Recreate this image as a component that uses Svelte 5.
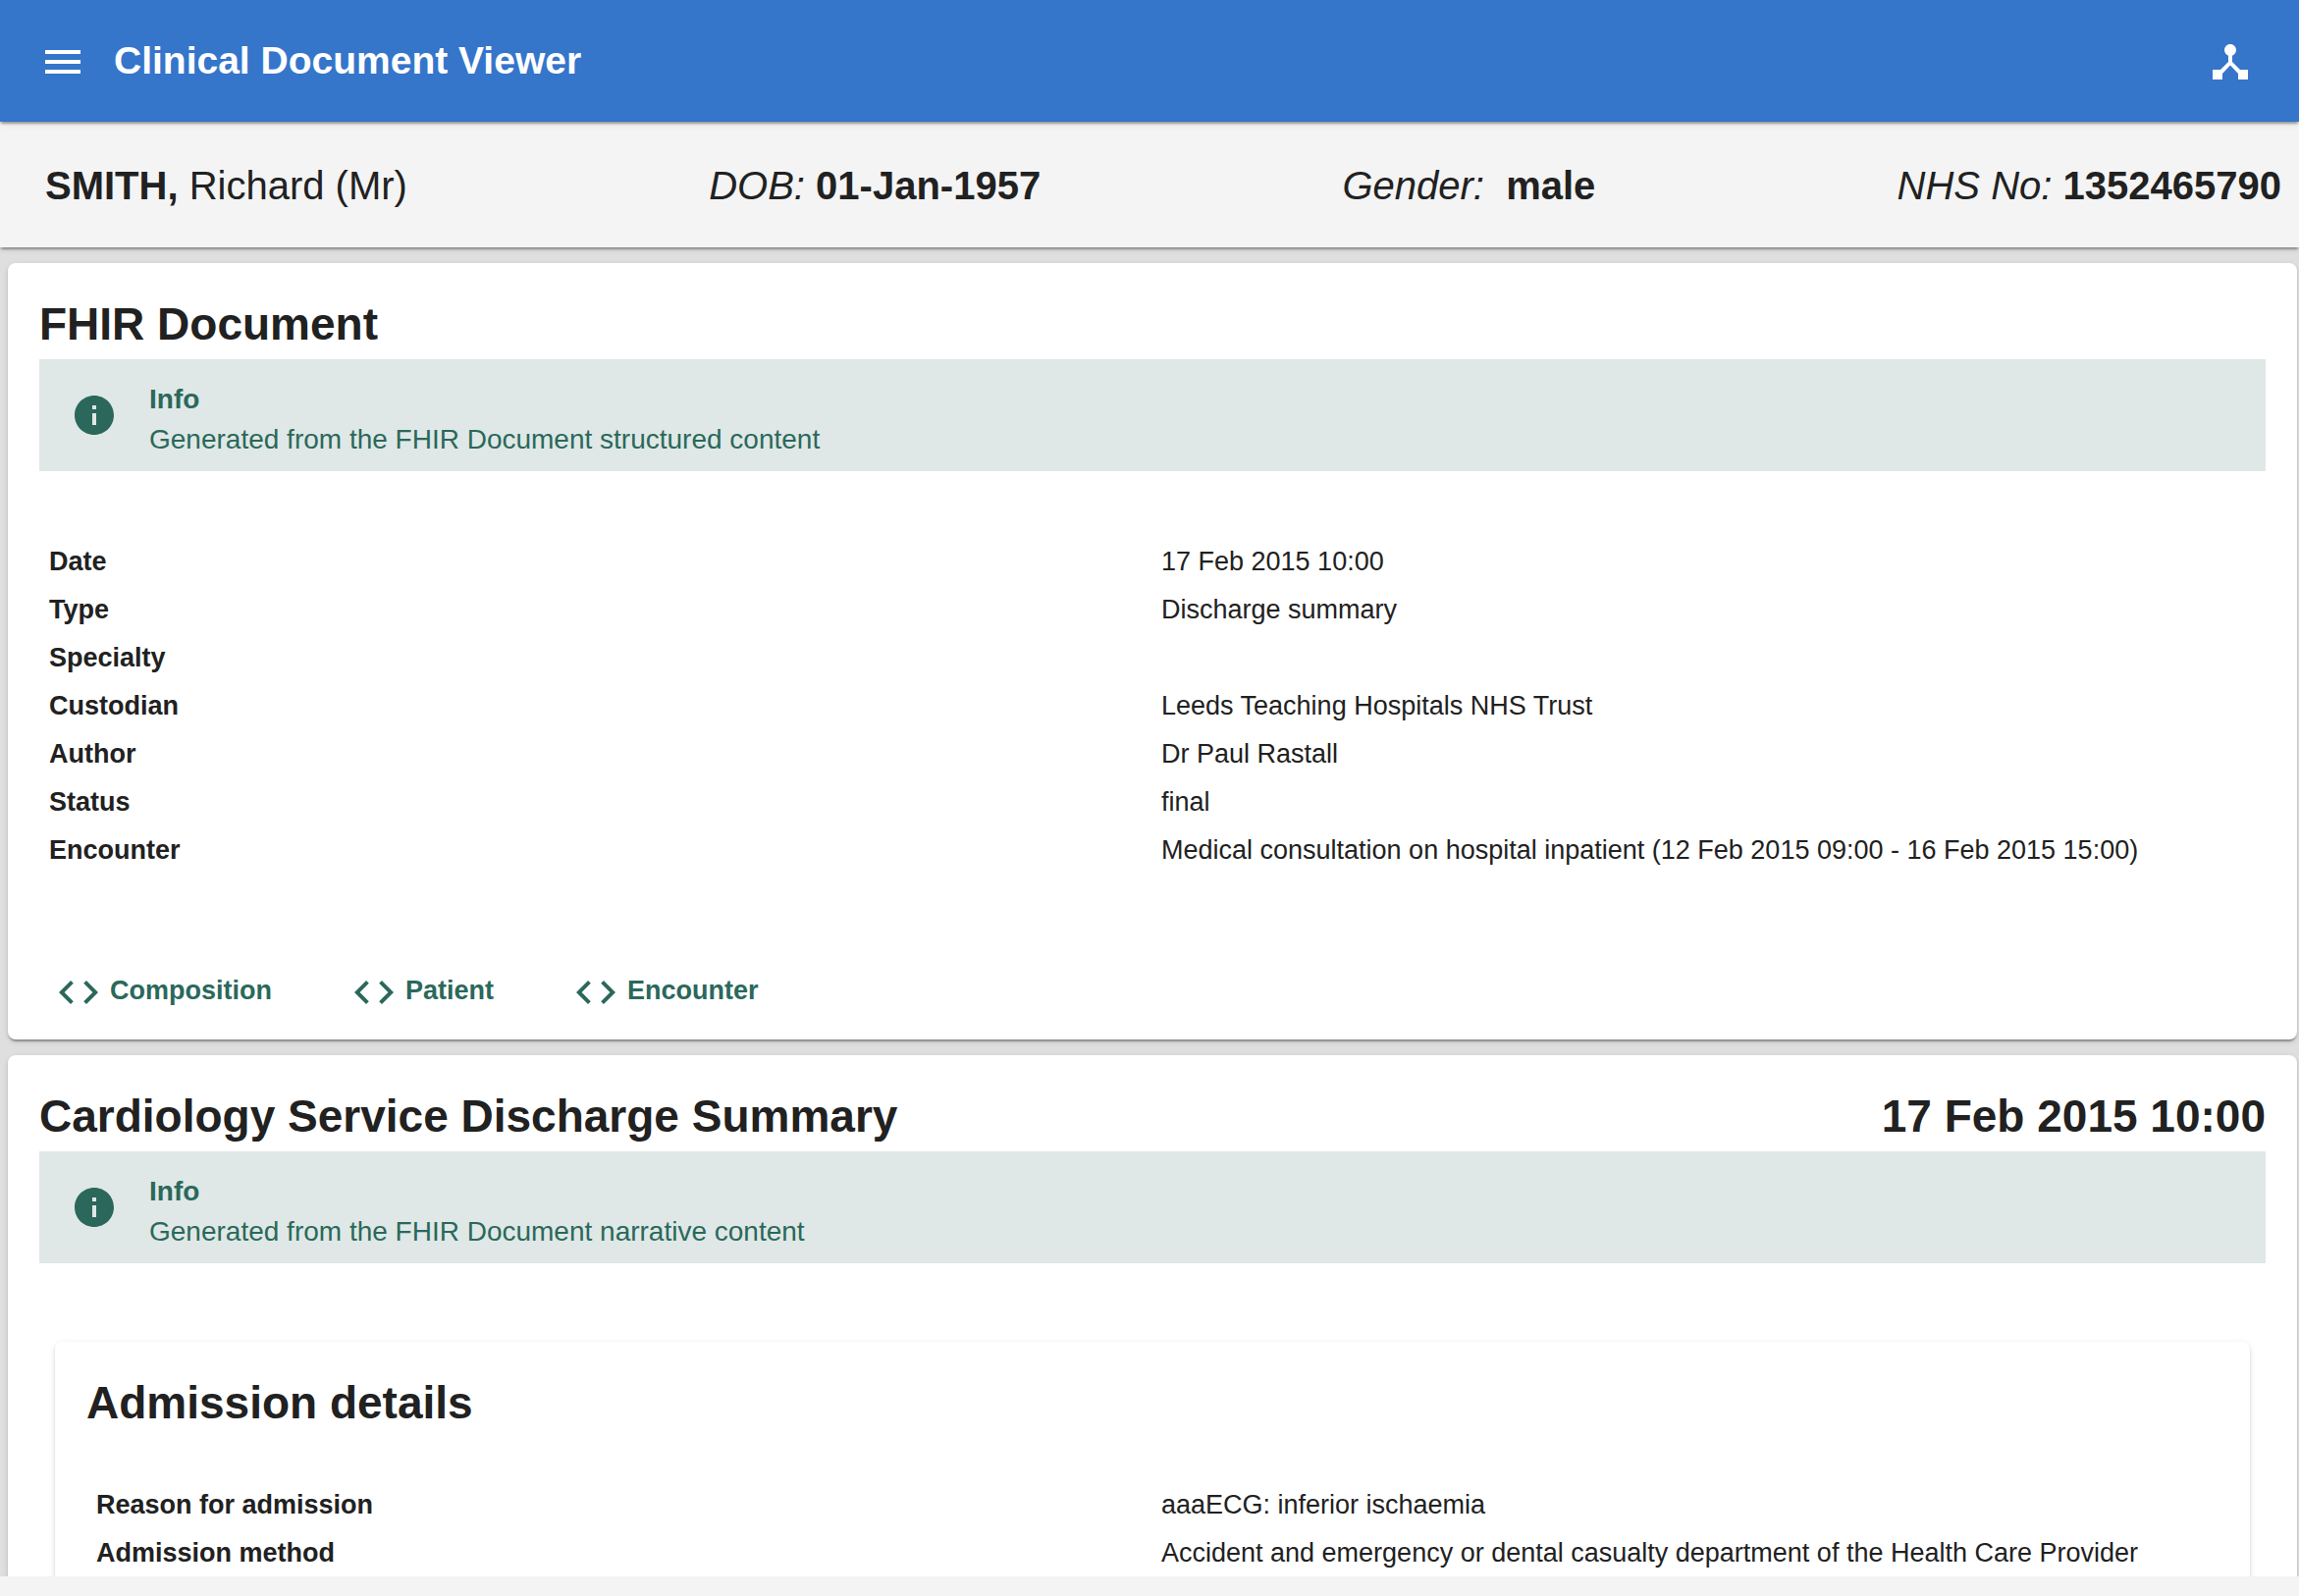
<script>
  const patient = {
    family: 'SMITH,',
    given: 'Richard (Mr)',
    dob: '01-Jan-1957',
    gender: 'male',
    nhs: '1352465790',
  };

  const documentRows = [
    ['Date', '17 Feb 2015 10:00'],
    ['Type', 'Discharge summary'],
    ['Specialty', ''],
    ['Custodian', 'Leeds Teaching Hospitals NHS Trust'],
    ['Author', 'Dr Paul Rastall'],
    ['Status', 'final'],
    ['Encounter', 'Medical consultation on hospital inpatient (12 Feb 2015 09:00 - 16 Feb 2015 15:00)'],
  ];

  const admissionRows = [
    ['Reason for admission', 'aaaECG: inferior ischaemia'],
    ['Admission method', 'Accident and emergency or dental casualty department of the Health Care Provider'],
  ];

  const resources = ['Composition', 'Patient', 'Encounter'];
</script>

{#snippet info(message)}
  <div class="info" role="note">
    <svg class="icon" viewBox="0 0 24 24" aria-hidden="true">
      <path d="M12 2C6.48 2 2 6.48 2 12s4.48 10 10 10 10-4.48 10-10S17.52 2 12 2zm1 15h-2v-6h2v6zm0-8h-2V7h2v2z" />
    </svg>
    <div class="info-text">
      <strong>Info</strong>
      <p>{message}</p>
    </div>
  </div>
{/snippet}

{#snippet details(rows)}
  <table>
    <tbody>
      {#each rows as [label, value]}
        <tr>
          <th scope="row">{label}</th>
          <td>{value}</td>
        </tr>
      {/each}
    </tbody>
  </table>
{/snippet}

<div class="shell">
  <header class="appbar">
    <button class="icon-button" aria-label="Open menu">
      <svg class="icon" viewBox="0 0 24 24" aria-hidden="true">
        <path d="M3 18h18v-2H3v2zm0-5h18v-2H3v2zm0-7v2h18V6H3z" />
      </svg>
    </button>
    <h1>Clinical Document Viewer</h1>
    <button class="icon-button end" aria-label="Resource map">
      <svg class="icon" viewBox="0 0 24 24" aria-hidden="true">
        <path d="M17 16l-4-4V8.82C14.16 8.4 15 7.3 15 6c0-1.66-1.34-3-3-3S9 4.34 9 6c0 1.3.84 2.4 2 2.82V12l-4 4H3v5h5v-3.05l4-4.2 4 4.2V21h5v-5h-4z" />
      </svg>
    </button>
  </header>

  <section class="patient" aria-label="Patient">
    <div><b>{patient.family}</b> {patient.given}</div>
    <div><i>DOB:</i> <b>{patient.dob}</b></div>
    <div><i>Gender:</i>&nbsp; <b>{patient.gender}</b></div>
    <div><i>NHS No:</i> <b>{patient.nhs}</b></div>
  </section>

  <main>
    <section class="card">
      <h2>FHIR Document</h2>
      {@render info('Generated from the FHIR Document structured content')}
      <div class="document-details">
        {@render details(documentRows)}
      </div>
      <div class="actions">
        {#each resources as name}
          <button class="resource">
            <svg class="icon" viewBox="0 0 24 24" aria-hidden="true">
              <path d="M9.4 16.6L4.8 12l4.6-4.6L8 6l-6 6 6 6 1.4-1.4zm5.2 0l4.6-4.6-4.6-4.6L16 6l6 6-6 6-1.4-1.4z" />
            </svg>
            <span>{name}</span>
          </button>
        {/each}
      </div>
    </section>

    <section class="card">
      <div class="title-row">
        <h2>Cardiology Service Discharge Summary</h2>
        <h2>17 Feb 2015 10:00</h2>
      </div>
      {@render info('Generated from the FHIR Document narrative content')}
      <section class="card inner">
        <h2>Admission details</h2>
        {@render details(admissionRows)}
      </section>
    </section>
  </main>
  <footer></footer>
</div>

<style>
  :global(body) {
    background: #f4f4f4;
  }

  .shell {
    display: flex;
    flex-direction: column;
    height: 100vh;
    overflow: hidden;
    color: #212121;
    font-family: 'Liberation Sans', Arial, sans-serif;
    font-size: 27px;
    line-height: 33px;
  }

  h1,
  h2,
  p {
    margin: 0;
  }

  button {
    padding: 0;
    border: 0;
    background: none;
    color: inherit;
    font: inherit;
    cursor: pointer;
  }

  .icon {
    display: block;
    flex: none;
    width: 48px;
    height: 48px;
    fill: currentColor;
  }

  .appbar,
  .patient,
  .card {
    box-shadow:
      0 4px 2px -2px rgba(0, 0, 0, 0.2),
      0 2px 2px rgba(0, 0, 0, 0.14),
      0 2px 6px rgba(0, 0, 0, 0.12);
  }

  .appbar,
  .patient {
    position: relative;
    display: flex;
    flex: none;
    align-items: center;
    box-sizing: border-box;
  }

  .appbar {
    z-index: 2;
    gap: 28px;
    height: 124px;
    padding: 0 46px 0 40px;
    background: #3575ca;
    color: #fff;
  }

  h1 {
    font-size: 39px;
    line-height: 48px;
  }

  .icon-button {
    padding-top: 2px;
  }

  .icon-button.end {
    margin-left: auto;
  }

  .patient {
    z-index: 1;
    justify-content: space-between;
    height: 128px;
    padding: 2px 18px 0 46px;
    background: #f4f4f4;
    font-size: 40px;
    line-height: 48px;
  }

  main {
    flex: 1;
    min-height: 0;
    overflow: hidden;
    padding: 16px 2px 0 8px;
    background: #dfdfdf;
  }

  .card {
    margin-bottom: 16px;
    padding: 32px 32px 24px;
    border-radius: 8px;
    background: #fff;
  }

  h2 {
    padding-bottom: 6px;
    font-size: 46px;
    line-height: 60px;
  }

  .title-row {
    display: flex;
    justify-content: space-between;
  }

  .info {
    display: flex;
    align-items: center;
    gap: 32px;
    padding: 12px 32px;
    background: #dfe8e6;
    color: #2b685b;
    font-size: 28px;
    line-height: 41px;
  }

  .info-text {
    padding-top: 8px;
  }

  table {
    width: 100%;
    table-layout: fixed;
    border-spacing: 0;
  }

  th,
  td {
    width: 50%;
    height: 33px;
    padding: 8px;
    text-align: left;
  }

  th {
    padding-left: 10px;
  }

  .document-details {
    padding: 68px 0 64px;
  }

  .actions {
    display: flex;
    gap: 80px;
    padding: 32px 16px 0;
  }

  .resource {
    display: flex;
    align-items: center;
    gap: 8px;
    color: #2b685b;
    font-weight: 700;
  }

  .resource span {
    padding-bottom: 4px;
  }

  .inner {
    margin: 80px 16px 0;
  }

  .inner table {
    margin-top: 44px;
  }

  footer {
    position: relative;
    z-index: 1;
    flex: none;
    height: 20px;
    background: #f4f4f4;
  }
</style>
